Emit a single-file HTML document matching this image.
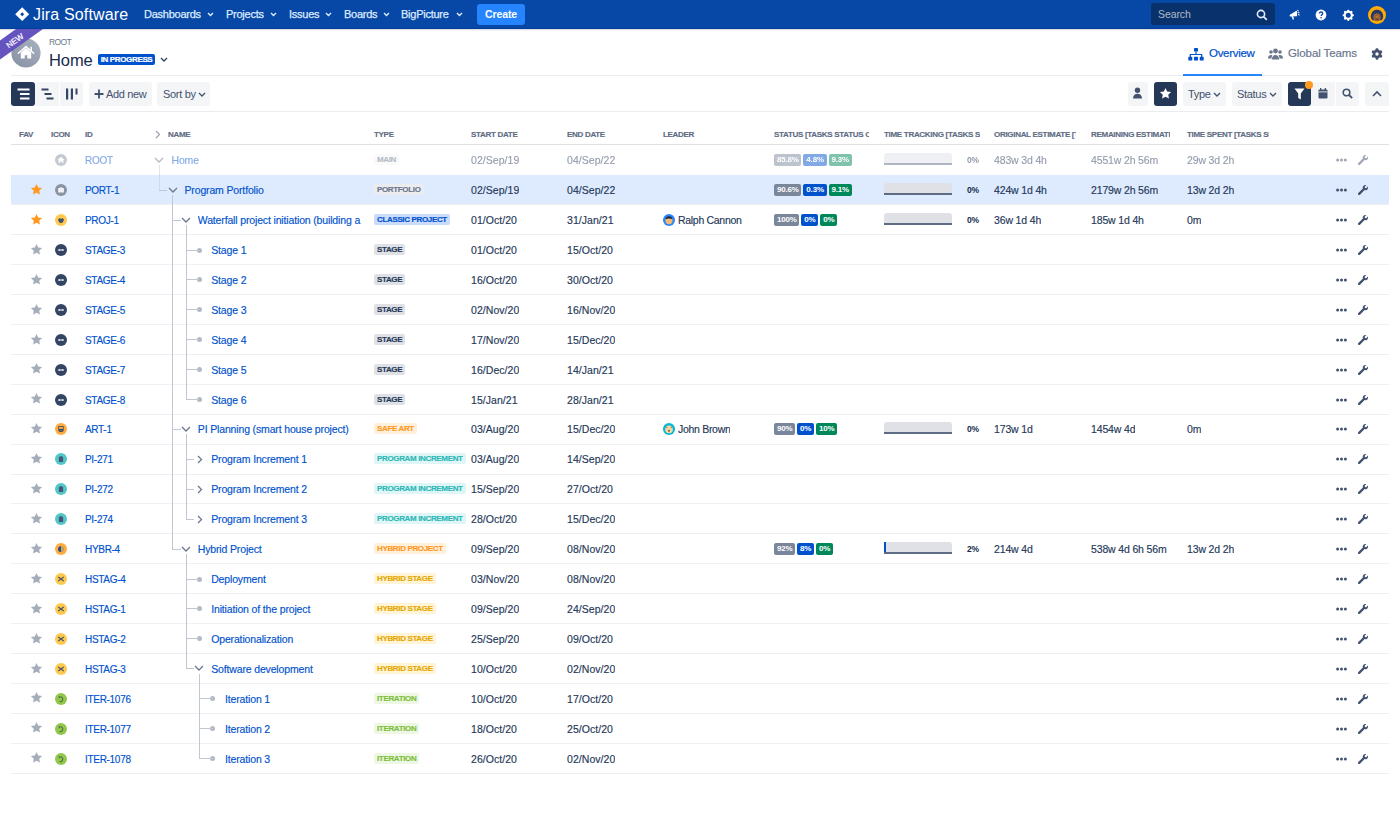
<!DOCTYPE html>
<html><head><meta charset="utf-8"><style>
*{box-sizing:border-box;margin:0;padding:0}
html,body{width:1400px;height:836px;overflow:hidden;background:#fff}
body{font-family:"Liberation Sans",sans-serif;color:#172B4D;position:relative}
.a{position:absolute;white-space:nowrap}
.nav{position:absolute;left:0;top:0;width:1400px;height:29px;background:#0747A6;border-bottom:1px solid #043C9A;box-shadow:0 1px 1.5px rgba(9,30,66,0.18)}
.nv{position:absolute;top:0;height:29px;line-height:29px;color:#DEEBFF;font-size:11px;letter-spacing:-0.25px;-webkit-text-stroke:0.25px #DEEBFF}
.btn{position:absolute;background:#F4F5F7;border-radius:3px}
.dark{background:#253858}
.th{position:absolute;top:130px;font-size:8px;font-weight:bold;color:#5E6C84;letter-spacing:-0.3px;-webkit-text-stroke:0.15px #5E6C84;line-height:10px;white-space:nowrap;overflow:hidden}
.row{position:absolute;left:11px;width:1378px;height:30px;border-bottom:1px solid #EEF0F3}
.c{position:absolute;top:0;height:29px;line-height:31.5px;-webkit-text-stroke:0.15px currentColor;color:#253858;font-size:10.5px;white-space:nowrap;overflow:hidden;letter-spacing:-0.15px}
.lk{color:#0052CC!important}
.loz{position:absolute;top:9px;height:11px;line-height:11px;font-size:8px;font-weight:bold;padding:0 3px;border-radius:2px;letter-spacing:-0.35px;-webkit-text-stroke:0.15px currentColor}
.bd{display:inline-block;height:11.5px;line-height:11.5px;font-size:8px;font-weight:bold;color:#fff;padding:0 2.9px;border-radius:2px;margin-right:2px;letter-spacing:-0.2px;vertical-align:top}
</style></head><body>

<div class="nav"></div>
<svg class="a" style="left:15px;top:7px" width="15" height="15" viewBox="0 0 15 15"><path d="M7.2 0.3L14.2 7.2 7.2 14.1 0.2 7.2z" fill="#fff"/><path d="M7.2 5.2L9.2 7.2 7.2 9.2 5.2 7.2z" fill="#0747A6"/></svg>
<div class="a" style="left:33px;top:4px;height:22px;line-height:22px;font-size:16px;color:#fff;letter-spacing:0.15px">Jira Software</div>
<div class="nv" style="left:144px">Dashboards</div>
<svg class="a" style="left:207px;top:12px" width="7" height="5" viewBox="0 0 7 5"><path d="M1 1l2.5 2.5L6 1" stroke="#DEEBFF" stroke-width="1.4" fill="none"/></svg>
<div class="nv" style="left:226px">Projects</div>
<svg class="a" style="left:270px;top:12px" width="7" height="5" viewBox="0 0 7 5"><path d="M1 1l2.5 2.5L6 1" stroke="#DEEBFF" stroke-width="1.4" fill="none"/></svg>
<div class="nv" style="left:289px">Issues</div>
<svg class="a" style="left:325px;top:12px" width="7" height="5" viewBox="0 0 7 5"><path d="M1 1l2.5 2.5L6 1" stroke="#DEEBFF" stroke-width="1.4" fill="none"/></svg>
<div class="nv" style="left:344px">Boards</div>
<svg class="a" style="left:383px;top:12px" width="7" height="5" viewBox="0 0 7 5"><path d="M1 1l2.5 2.5L6 1" stroke="#DEEBFF" stroke-width="1.4" fill="none"/></svg>
<div class="nv" style="left:401px">BigPicture</div>
<svg class="a" style="left:456px;top:12px" width="7" height="5" viewBox="0 0 7 5"><path d="M1 1l2.5 2.5L6 1" stroke="#DEEBFF" stroke-width="1.4" fill="none"/></svg>
<div class="a" style="left:477px;top:4px;width:48px;height:21px;background:#2684FF;border-radius:3px;color:#fff;font-size:10.5px;font-weight:bold;text-align:center;line-height:21px;letter-spacing:-0.1px">Create</div>
<div class="a" style="left:1151px;top:3px;width:124px;height:22px;background:#09326C;border-radius:3px"></div>
<div class="a" style="left:1158px;top:3px;height:22px;line-height:22px;font-size:10.5px;color:#B3BAC5;letter-spacing:-0.1px">Search</div>
<svg class="a" style="left:1256px;top:9px" width="12" height="12" viewBox="0 0 12 12"><circle cx="5" cy="5" r="3.6" stroke="#DEEBFF" stroke-width="1.6" fill="none"/><path d="M7.6 7.6L10.8 10.8" stroke="#DEEBFF" stroke-width="1.8"/></svg>
<svg class="a" style="left:1286px;top:6px" width="18" height="18" viewBox="0 0 18 18"><path d="M4.2 9.2L10.4 5.5V9.7L4.4 10z" fill="#fff" stroke="#fff" stroke-width="1.2" stroke-linejoin="round"/><path d="M6.4 10.2L7.2 12.9" stroke="#fff" stroke-width="1.5" stroke-linecap="round"/><path d="M11.6 4.4l.8.5M12 6.6l1 .2M12.4 8.6l.9.4" stroke="#DEEBFF" stroke-width="1.1" stroke-linecap="round"/></svg>
<svg class="a" style="left:1315px;top:9px" width="12" height="12" viewBox="0 0 12 12"><circle cx="6" cy="6" r="5.4" fill="#fff"/><path d="M4.3 4.6c0-1 .8-1.6 1.7-1.6s1.7.6 1.7 1.5c0 1.2-1.5 1.2-1.5 2.4" stroke="#0747A6" stroke-width="1.3" fill="none"/><circle cx="6.1" cy="8.7" r=".8" fill="#0747A6"/></svg>
<svg class="a" style="left:1341.5px;top:8.5px" width="12.5" height="12.5" viewBox="0 0 24 24"><circle cx="12" cy="12" r="8.8" fill="#fff"/><rect x="9.9" y="1.1999999999999993" width="4.2" height="10.8" rx="1.47" fill="#fff" transform="rotate(0.0 12 12)"/><rect x="9.9" y="1.1999999999999993" width="4.2" height="10.8" rx="1.47" fill="#fff" transform="rotate(45.0 12 12)"/><rect x="9.9" y="1.1999999999999993" width="4.2" height="10.8" rx="1.47" fill="#fff" transform="rotate(90.0 12 12)"/><rect x="9.9" y="1.1999999999999993" width="4.2" height="10.8" rx="1.47" fill="#fff" transform="rotate(135.0 12 12)"/><rect x="9.9" y="1.1999999999999993" width="4.2" height="10.8" rx="1.47" fill="#fff" transform="rotate(180.0 12 12)"/><rect x="9.9" y="1.1999999999999993" width="4.2" height="10.8" rx="1.47" fill="#fff" transform="rotate(225.0 12 12)"/><rect x="9.9" y="1.1999999999999993" width="4.2" height="10.8" rx="1.47" fill="#fff" transform="rotate(270.0 12 12)"/><rect x="9.9" y="1.1999999999999993" width="4.2" height="10.8" rx="1.47" fill="#fff" transform="rotate(315.0 12 12)"/><circle cx="12" cy="12" r="4.8" fill="#0747A6"/></svg>
<svg class="a" style="left:1368px;top:5.5px" width="18" height="18" viewBox="0 0 18 18"><circle cx="9" cy="9" r="9" fill="#FFAB00"/><path d="M2.8 11c0-4.6 2.6-7.2 6.2-7.2s6.2 2.6 6.2 7.2c-.3 1.5-1 2.6-1.8 3.2H4.6c-.8-.6-1.5-1.7-1.8-3.2z" fill="#24396B"/><ellipse cx="9" cy="11.2" rx="3.7" ry="4" fill="#9C6135"/><path d="M5.2 9c1-1.4 2.3-1.9 3.8-1.9s2.8.5 3.8 1.9c-.4-2.6-1.8-3.8-3.8-3.8S5.6 6.4 5.2 9z" fill="#24396B"/><circle cx="9" cy="10.8" r=".5" fill="#FFC400"/><path d="M7.6 13.3h2.8" stroke="#3A2414" stroke-width=".7"/></svg>
<svg class="a" style="left:11px;top:38px" width="30" height="30" viewBox="0 0 30 30"><defs><linearGradient id="hg" x1="1" y1="0" x2="0" y2="1"><stop offset="0" stop-color="#A9B1BF"/><stop offset="1" stop-color="#8590A2"/></linearGradient></defs><circle cx="15" cy="15" r="14.6" fill="url(#hg)"/><path d="M7.3 15.3L15 8.6l7.7 6.7" stroke="#fff" stroke-width="1.5" fill="none" stroke-linecap="round"/><path d="M20.2 13.1V9.2" stroke="#fff" stroke-width="1.5" stroke-linecap="round"/><path d="M9.8 14.5L15 10l5.2 4.5V20.6h-3.9v-3.3h-2.6v3.3H9.8z" fill="#fff"/></svg>
<svg class="a" style="left:0;top:29px" width="50" height="35" viewBox="0 0 50 35"><path d="M16 0H43L0 30.5V11.4z" fill="#6554C0"/><text x="0" y="0" transform="translate(15.2 12.2) rotate(-35.3)" text-anchor="middle" font-family="Liberation Sans" font-size="8.2" fill="#fff" stroke="#fff" stroke-width="0.2" dominant-baseline="middle">NEW</text></svg>
<div class="a" style="left:49px;top:37px;font-size:8.5px;line-height:10px;color:#6B778C;letter-spacing:-0.6px">ROOT</div>
<div class="a" style="left:49px;top:50px;font-size:16.5px;line-height:20px;color:#172B4D;letter-spacing:-0.1px">Home</div>
<div class="a" style="left:98px;top:54px;width:57px;height:11px;background:#0052CC;border-radius:2px;color:#fff;font-size:8px;font-weight:bold;line-height:11px;text-align:center;letter-spacing:-0.35px;-webkit-text-stroke:0.2px #fff">IN PROGRESS</div>
<svg class="a" style="left:160px;top:57px" width="8" height="6" viewBox="0 0 8 6"><path d="M1 1l3 3 3-3" stroke="#344563" stroke-width="1.4" fill="none"/></svg>
<svg class="a" style="left:1188px;top:48px" width="16" height="13" viewBox="0 0 16 13"><rect x="6" y="0" width="4" height="3.5" rx=".6" fill="#0052CC"/><path d="M8 3.5v3M2.3 9V6.5h11.4V9" stroke="#0052CC" stroke-width="1.2" fill="none"/><rect x="0.3" y="8.8" width="4" height="3.8" rx=".6" fill="#0052CC"/><rect x="6" y="8.8" width="4" height="3.8" rx=".6" fill="#0052CC"/><rect x="11.7" y="8.8" width="4" height="3.8" rx=".6" fill="#0052CC"/></svg>
<div class="a" style="left:1209px;top:45px;font-size:11.5px;line-height:16px;color:#0052CC;letter-spacing:-0.3px;-webkit-text-stroke:0.2px #0052CC">Overview</div>
<svg class="a" style="left:1268px;top:48px" width="15" height="12" viewBox="0 0 15 12"><circle cx="7.5" cy="3" r="2.4" fill="#6B778C"/><circle cx="3" cy="4" r="1.8" fill="#6B778C"/><circle cx="12" cy="4" r="1.8" fill="#6B778C"/><path d="M3.8 11.5c0-2.5 1.6-4.5 3.7-4.5s3.7 2 3.7 4.5z" fill="#6B778C"/><path d="M0 10.5c0-2 1.2-3.5 3-3.5.6 0 1 .1 1.4.4-.6.8-1 1.9-1 3.1z" fill="#6B778C"/><path d="M15 10.5c0-2-1.2-3.5-3-3.5-.6 0-1 .1-1.4.4.6.8 1 1.9 1 3.1z" fill="#6B778C"/></svg>
<div class="a" style="left:1288px;top:45px;font-size:11.5px;line-height:16px;color:#6B778C;letter-spacing:-0.1px;-webkit-text-stroke:0.2px #6B778C">Global Teams</div>
<svg class="a" style="left:1371px;top:48px" width="12" height="12" viewBox="0 0 24 24"><circle cx="12" cy="12" r="8.8" fill="#42526E"/><rect x="9.3" y="0.5" width="5.4" height="11.5" rx="1.89" fill="#42526E" transform="rotate(0.0 12 12)"/><rect x="9.3" y="0.5" width="5.4" height="11.5" rx="1.89" fill="#42526E" transform="rotate(60.0 12 12)"/><rect x="9.3" y="0.5" width="5.4" height="11.5" rx="1.89" fill="#42526E" transform="rotate(120.0 12 12)"/><rect x="9.3" y="0.5" width="5.4" height="11.5" rx="1.89" fill="#42526E" transform="rotate(180.0 12 12)"/><rect x="9.3" y="0.5" width="5.4" height="11.5" rx="1.89" fill="#42526E" transform="rotate(240.0 12 12)"/><rect x="9.3" y="0.5" width="5.4" height="11.5" rx="1.89" fill="#42526E" transform="rotate(300.0 12 12)"/><circle cx="12" cy="12" r="3.4" fill="#fff"/></svg>
<div class="a" style="left:11px;top:75px;width:1378px;height:1px;background:#EBECF0"></div>
<div class="a" style="left:1183px;top:74px;width:79px;height:2px;background:#2684FF"></div>
<div class="btn" style="left:35px;top:82px;width:48px;height:24px"></div>
<div class="btn dark" style="left:11px;top:82px;width:24px;height:24px"></div>
<svg class="a" style="left:17px;top:88px" width="13" height="12" viewBox="0 0 13 12"><rect x="0.5" y="0.5" width="12" height="2" fill="#fff"/><rect x="3" y="5" width="9.5" height="2" fill="#fff"/><rect x="3" y="9.5" width="9.5" height="2" fill="#fff"/></svg>
<svg class="a" style="left:41px;top:88px" width="13" height="12" viewBox="0 0 13 12"><rect x="0.5" y="0.5" width="7" height="2" fill="#344563"/><rect x="3.5" y="5" width="7" height="2" fill="#344563"/><rect x="5.5" y="9.5" width="7" height="2" fill="#344563"/></svg>
<div class="a" style="left:59px;top:82px;width:1px;height:24px;background:#fff"></div>
<svg class="a" style="left:65px;top:88px" width="13" height="12" viewBox="0 0 13 12"><rect x="1" y="0.5" width="2.2" height="11" fill="#344563"/><rect x="5.8" y="0.5" width="2.2" height="11" fill="#344563"/><rect x="10.5" y="0.5" width="2" height="6" fill="#344563"/></svg>
<div class="btn" style="left:89px;top:82px;width:63px;height:24px"></div>
<svg class="a" style="left:94px;top:89px" width="10" height="10" viewBox="0 0 10 10"><path d="M5 .5v9M.5 5h9" stroke="#42526E" stroke-width="1.8"/></svg>
<div class="a" style="left:106px;top:82px;line-height:24px;font-size:11px;color:#42526E;letter-spacing:-0.35px">Add new</div>
<div class="btn" style="left:157px;top:82px;width:53px;height:24px"></div>
<div class="a" style="left:163px;top:82px;line-height:24px;font-size:11px;color:#42526E;letter-spacing:-0.3px">Sort by</div>
<svg class="a" style="left:198px;top:92px" width="8" height="5" viewBox="0 0 8 5"><path d="M1 1l3 3 3-3" stroke="#42526E" stroke-width="1.3" fill="none"/></svg>
<div class="btn" style="left:1128px;top:82px;width:20px;height:24px"></div>
<svg class="a" style="left:1132px;top:87px" width="11" height="12" viewBox="0 0 11 12"><circle cx="5.5" cy="3.3" r="2.7" fill="#42526E"/><path d="M1 11.5c0-3 2-4.7 4.5-4.7S10 8.5 10 11.5z" fill="#42526E"/></svg>
<div class="btn dark" style="left:1154px;top:82px;width:23px;height:24px"></div>
<svg class="a" style="left:1159px;top:87px" width="13" height="13" viewBox="0 0 24 24"><path fill="#fff" d="M12 1.8l3.1 6.6 7.2.9-5.3 4.9 1.4 7.1L12 17.8l-6.4 3.5 1.4-7.1L1.7 9.3l7.2-.9z"/></svg>
<div class="btn" style="left:1183px;top:82px;width:43px;height:24px"></div>
<div class="a" style="left:1188px;top:82px;line-height:24px;font-size:11px;color:#42526E;letter-spacing:-0.3px">Type</div>
<svg class="a" style="left:1213px;top:92px" width="8" height="5" viewBox="0 0 8 5"><path d="M1 1l3 3 3-3" stroke="#42526E" stroke-width="1.3" fill="none"/></svg>
<div class="btn" style="left:1232px;top:82px;width:50px;height:24px"></div>
<div class="a" style="left:1237px;top:82px;line-height:24px;font-size:11px;color:#42526E;letter-spacing:-0.3px">Status</div>
<svg class="a" style="left:1269px;top:92px" width="8" height="5" viewBox="0 0 8 5"><path d="M1 1l3 3 3-3" stroke="#42526E" stroke-width="1.3" fill="none"/></svg>
<div class="btn" style="left:1311px;top:82px;width:48px;height:24px"></div>
<div class="btn dark" style="left:1288px;top:82px;width:23px;height:24px"></div>
<svg class="a" style="left:1294px;top:88px" width="11" height="12" viewBox="0 0 11 12"><path d="M0.5 0.5h10L6.8 5.5v6L4.2 10V5.5z" fill="#fff"/></svg>
<div class="a" style="left:1305px;top:81px;width:8px;height:8px;border-radius:50%;background:#FF991F"></div>
<svg class="a" style="left:1318px;top:88px" width="10" height="11" viewBox="0 0 10 11"><rect x="0.5" y="1.5" width="9" height="9" rx="1" fill="#42526E"/><rect x="2" y="0" width="1.3" height="2.5" fill="#42526E"/><rect x="6.7" y="0" width="1.3" height="2.5" fill="#42526E"/><rect x="0.5" y="3.5" width="9" height=".8" fill="#F4F5F7"/></svg>
<div class="a" style="left:1335px;top:82px;width:1px;height:24px;background:#fff"></div>
<svg class="a" style="left:1342px;top:88px" width="11" height="11" viewBox="0 0 11 11"><circle cx="4.5" cy="4.5" r="3.3" stroke="#42526E" stroke-width="1.6" fill="none"/><path d="M7 7l3.2 3.2" stroke="#42526E" stroke-width="1.8"/></svg>
<div class="btn" style="left:1365px;top:82px;width:24px;height:24px"></div>
<svg class="a" style="left:1372px;top:90px" width="10" height="7" viewBox="0 0 10 7"><path d="M1 6l4-4 4 4" stroke="#42526E" stroke-width="1.6" fill="none"/></svg>
<div class="a" style="left:11px;top:111px;width:1378px;height:1px;background:#EBECF0"></div>
<div class="th" style="left:19px;width:30px">FAV</div>
<div class="th" style="left:51px;width:30px">ICON</div>
<div class="th" style="left:85px;width:60px">ID</div>
<div class="th" style="left:168px;width:190px">NAME</div>
<div class="th" style="left:374px;width:90px">TYPE</div>
<div class="th" style="left:471px;width:90px">START DATE</div>
<div class="th" style="left:567px;width:90px">END DATE</div>
<div class="th" style="left:663px;width:100px">LEADER</div>
<div class="th" style="left:774px;width:95px">STATUS [TASKS STATUS COUNT]</div>
<div class="th" style="left:884px;width:96px">TIME TRACKING [TASKS SUM]</div>
<div class="th" style="left:994px;width:82px">ORIGINAL ESTIMATE [TASKS]</div>
<div class="th" style="left:1091px;width:79px">REMAINING ESTIMATE [TASKS]</div>
<div class="th" style="left:1187px;width:82px">TIME SPENT [TASKS SUM]</div>
<svg class="a" style="left:155px;top:130px" width="6" height="9" viewBox="0 0 6 9"><path d="M1 1l3.5 3.5L1 8" stroke="#97A0AF" stroke-width="1.1" fill="none"/></svg>
<div class="a" style="left:11px;top:144px;width:1378px;height:1px;background:#DFE1E6"></div>
<div class="a" style="left:0;top:145.3px;width:1400px;height:30px;opacity:0.5;">
<div class="a" style="left:55px;top:9px;line-height:0"><svg width="12" height="12" viewBox="0 0 12 12"><circle cx="6" cy="6" r="6" fill="#8993A4"/><path d="M6 2.8L2.6 5.9h1v2.9h1.7V7.2h1.4v1.6h1.7V5.9h1z" fill="#fff"/></svg></div>
<div class="c lk" style="left:85px;width:70px;font-size:10px;letter-spacing:-0.3px">ROOT</div>
<div class="a" style="left:154.3px;top:11.5px;line-height:0"><svg width="10" height="6" viewBox="0 0 10 6"><path d="M1 1l4 4 4-4" stroke="#6B778C" stroke-width="1.3" fill="none"/></svg></div>
<div class="c lk" style="left:171.5px;width:196.5px">Home</div>
<div class="loz" style="left:374px;background:#F4F5F7;color:#6B778C">MAIN</div>
<div class="c" style="left:471px;letter-spacing:0.05px">02/Sep/19</div>
<div class="c" style="left:567px;letter-spacing:0.05px">04/Sep/22</div>
<div class="a" style="left:774px;top:9px;height:11px;line-height:0"><span class="bd" style="background:#7A869A">85.8%</span><span class="bd" style="background:#0052CC">4.8%</span><span class="bd" style="background:#00875A">9.3%</span></div>
<div class="a" style="left:884px;top:8px;width:68px;height:10px;background:#DFE1E6;border-radius:3px 3px 0 0"></div>
<div class="a" style="left:884px;top:18px;width:68px;height:2px;background:#5E6C84"></div>
<div class="a" style="left:967px;top:1px;line-height:29px;font-size:8.5px;font-weight:bold;color:#172B4D;letter-spacing:-0.3px">0%</div>
<div class="c" style="left:994px">483w 3d 4h</div>
<div class="c" style="left:1091px">4551w 2h 56m</div>
<div class="c" style="left:1187px">29w 3d 2h</div>
<svg class="a" style="left:1336px;top:13px" width="11" height="4" viewBox="0 0 11 4"><circle cx="1.6" cy="2" r="1.5" fill="#42526E"/><circle cx="5.5" cy="2" r="1.5" fill="#42526E"/><circle cx="9.4" cy="2" r="1.5" fill="#42526E"/></svg>
<div class="a" style="left:1357px;top:9px;line-height:0"><svg width="12" height="12" viewBox="0 0 12 12"><path d="M10.9 2.6L9.2 4.3 7.9 4.1 7.7 2.8 9.4 1.1C8.3.7 7 1 6.3 1.9c-.6.7-.7 1.7-.4 2.5L1.3 9c-.5.5-.5 1.2 0 1.7s1.2.5 1.7 0l4.6-4.6c.8.3 1.8.2 2.5-.4.9-.7 1.2-2 .8-3.1z" fill="#42526E"/></svg></div>
</div>
<div class="a" style="left:11px;top:175px;width:1378px;height:30px;background:#DEEBFF"></div>
<div class="a" style="left:11px;top:204px;width:1378px;height:1px;background:#EEF0F3"></div>
<div class="a" style="left:0;top:175.21px;width:1400px;height:30px;">
<div class="a" style="left:29.5px;top:7.8px;line-height:0"><svg width="13" height="13" viewBox="0 0 24 24"><path fill="#FF991F" d="M12 1.8l3.1 6.6 7.2.9-5.3 4.9 1.4 7.1L12 17.8l-6.4 3.5 1.4-7.1L1.7 9.3l7.2-.9z"/></svg></div>
<div class="a" style="left:55px;top:9px;line-height:0"><svg width="12" height="12" viewBox="0 0 12 12"><circle cx="6" cy="6" r="6" fill="#8993A4"/><rect x="3.3" y="4" width="1.7" height="4.6" rx=".3" fill="#fff"/><rect x="5.2" y="3.3" width="1.7" height="5.3" rx=".3" fill="#fff"/><rect x="7.1" y="4" width="1.7" height="4.6" rx=".3" fill="#fff"/></svg></div>
<div class="c lk" style="left:85px;width:70px;font-size:10px;letter-spacing:-0.3px">PORT-1</div>
<div class="a" style="left:167.6px;top:11.5px;line-height:0"><svg width="10" height="6" viewBox="0 0 10 6"><path d="M1 1l4 4 4-4" stroke="#6B778C" stroke-width="1.3" fill="none"/></svg></div>
<div class="c lk" style="left:184.5px;width:183.5px">Program Portfolio</div>
<div class="loz" style="left:374px;background:#EBECF0;color:#6B778C">PORTFOLIO</div>
<div class="c" style="left:471px;letter-spacing:0.05px">02/Sep/19</div>
<div class="c" style="left:567px;letter-spacing:0.05px">04/Sep/22</div>
<div class="a" style="left:774px;top:9px;height:11px;line-height:0"><span class="bd" style="background:#7A869A">90.6%</span><span class="bd" style="background:#0052CC">0.3%</span><span class="bd" style="background:#00875A">9.1%</span></div>
<div class="a" style="left:884px;top:8px;width:68px;height:10px;background:#DFE1E6;border-radius:3px 3px 0 0"></div>
<div class="a" style="left:884px;top:18px;width:68px;height:2px;background:#5E6C84"></div>
<div class="a" style="left:967px;top:1px;line-height:29px;font-size:8.5px;font-weight:bold;color:#172B4D;letter-spacing:-0.3px">0%</div>
<div class="c" style="left:994px">424w 1d 4h</div>
<div class="c" style="left:1091px">2179w 2h 56m</div>
<div class="c" style="left:1187px">13w 2d 2h</div>
<svg class="a" style="left:1336px;top:13px" width="11" height="4" viewBox="0 0 11 4"><circle cx="1.6" cy="2" r="1.5" fill="#42526E"/><circle cx="5.5" cy="2" r="1.5" fill="#42526E"/><circle cx="9.4" cy="2" r="1.5" fill="#42526E"/></svg>
<div class="a" style="left:1357px;top:9px;line-height:0"><svg width="12" height="12" viewBox="0 0 12 12"><path d="M10.9 2.6L9.2 4.3 7.9 4.1 7.7 2.8 9.4 1.1C8.3.7 7 1 6.3 1.9c-.6.7-.7 1.7-.4 2.5L1.3 9c-.5.5-.5 1.2 0 1.7s1.2.5 1.7 0l4.6-4.6c.8.3 1.8.2 2.5-.4.9-.7 1.2-2 .8-3.1z" fill="#42526E"/></svg></div>
</div>
<div class="a" style="left:11px;top:234px;width:1378px;height:1px;background:#EEF0F3"></div>
<div class="a" style="left:0;top:205.12px;width:1400px;height:30px;">
<div class="a" style="left:29.5px;top:7.8px;line-height:0"><svg width="13" height="13" viewBox="0 0 24 24"><path fill="#FF991F" d="M12 1.8l3.1 6.6 7.2.9-5.3 4.9 1.4 7.1L12 17.8l-6.4 3.5 1.4-7.1L1.7 9.3l7.2-.9z"/></svg></div>
<div class="a" style="left:55px;top:9px;line-height:0"><svg width="12" height="12" viewBox="0 0 12 12"><circle cx="6" cy="6" r="6" fill="#FFC94D"/><path d="M3 5.6l1.6-1.6 1.4.9 1.4-.9L9 5.6 8.2 7.8 6.9 9H5.1L3.8 7.8z" fill="#42526E"/></svg></div>
<div class="c lk" style="left:85px;width:70px;font-size:10px;letter-spacing:-0.3px">PROJ-1</div>
<div class="a" style="left:181.1px;top:11.5px;line-height:0"><svg width="10" height="6" viewBox="0 0 10 6"><path d="M1 1l4 4 4-4" stroke="#6B778C" stroke-width="1.3" fill="none"/></svg></div>
<div class="c lk" style="left:197.8px;width:170.2px">Waterfall project initiation (building a</div>
<div class="loz" style="left:374px;background:#C9DCFB;color:#0052CC">CLASSIC PROJECT</div>
<div class="c" style="left:471px;letter-spacing:0.05px">01/Oct/20</div>
<div class="c" style="left:567px;letter-spacing:0.05px">31/Jan/21</div>
<div class="a" style="left:663px;top:9px;line-height:0"><svg width="12" height="12" viewBox="0 0 12 12"><circle cx="6" cy="6" r="6" fill="#2684FF"/><circle cx="6" cy="6.6" r="3.6" fill="#F5B971"/><path d="M2.6 5.5c0-2.2 1.5-3.2 3.4-3.2s3.4 1 3.4 3.2c-.8-.6-2-.9-3.4-.9s-2.6.3-3.4.9z" fill="#1E2A3A"/></svg></div>
<div class="c" style="left:678px;letter-spacing:-0.3px">Ralph Cannon</div>
<div class="a" style="left:774px;top:9px;height:11px;line-height:0"><span class="bd" style="background:#7A869A">100%</span><span class="bd" style="background:#0052CC">0%</span><span class="bd" style="background:#00875A">0%</span></div>
<div class="a" style="left:884px;top:8px;width:68px;height:10px;background:#DFE1E6;border-radius:3px 3px 0 0"></div>
<div class="a" style="left:884px;top:18px;width:68px;height:2px;background:#5E6C84"></div>
<div class="a" style="left:967px;top:1px;line-height:29px;font-size:8.5px;font-weight:bold;color:#172B4D;letter-spacing:-0.3px">0%</div>
<div class="c" style="left:994px">36w 1d 4h</div>
<div class="c" style="left:1091px">185w 1d 4h</div>
<div class="c" style="left:1187px">0m</div>
<svg class="a" style="left:1336px;top:13px" width="11" height="4" viewBox="0 0 11 4"><circle cx="1.6" cy="2" r="1.5" fill="#42526E"/><circle cx="5.5" cy="2" r="1.5" fill="#42526E"/><circle cx="9.4" cy="2" r="1.5" fill="#42526E"/></svg>
<div class="a" style="left:1357px;top:9px;line-height:0"><svg width="12" height="12" viewBox="0 0 12 12"><path d="M10.9 2.6L9.2 4.3 7.9 4.1 7.7 2.8 9.4 1.1C8.3.7 7 1 6.3 1.9c-.6.7-.7 1.7-.4 2.5L1.3 9c-.5.5-.5 1.2 0 1.7s1.2.5 1.7 0l4.6-4.6c.8.3 1.8.2 2.5-.4.9-.7 1.2-2 .8-3.1z" fill="#42526E"/></svg></div>
</div>
<div class="a" style="left:11px;top:264px;width:1378px;height:1px;background:#EEF0F3"></div>
<div class="a" style="left:0;top:235.03000000000003px;width:1400px;height:30px;">
<div class="a" style="left:29.5px;top:7.8px;line-height:0"><svg width="13" height="13" viewBox="0 0 24 24"><path fill="#A5ADBA" d="M12 1.8l3.1 6.6 7.2.9-5.3 4.9 1.4 7.1L12 17.8l-6.4 3.5 1.4-7.1L1.7 9.3l7.2-.9z"/></svg></div>
<div class="a" style="left:55px;top:9px;line-height:0"><svg width="12" height="12" viewBox="0 0 12 12"><circle cx="6" cy="6" r="6" fill="#344563"/><rect x="3" y="5.4" width="6" height="1.2" rx=".6" fill="#fff"/><path d="M3.4 6l1.3-1.1v2.2zM8.6 6L7.3 4.9v2.2z" fill="#fff"/></svg></div>
<div class="c lk" style="left:85px;width:70px;font-size:10px;letter-spacing:-0.3px">STAGE-3</div>
<div class="a" style="left:196.8px;top:12.5px;width:5px;height:5px;border-radius:50%;background:#B3BAC5"></div>
<div class="c lk" style="left:211.2px;width:156.8px">Stage 1</div>
<div class="loz" style="left:374px;background:#DFE1E6;color:#253858">STAGE</div>
<div class="c" style="left:471px;letter-spacing:0.05px">01/Oct/20</div>
<div class="c" style="left:567px;letter-spacing:0.05px">15/Oct/20</div>
<svg class="a" style="left:1336px;top:13px" width="11" height="4" viewBox="0 0 11 4"><circle cx="1.6" cy="2" r="1.5" fill="#42526E"/><circle cx="5.5" cy="2" r="1.5" fill="#42526E"/><circle cx="9.4" cy="2" r="1.5" fill="#42526E"/></svg>
<div class="a" style="left:1357px;top:9px;line-height:0"><svg width="12" height="12" viewBox="0 0 12 12"><path d="M10.9 2.6L9.2 4.3 7.9 4.1 7.7 2.8 9.4 1.1C8.3.7 7 1 6.3 1.9c-.6.7-.7 1.7-.4 2.5L1.3 9c-.5.5-.5 1.2 0 1.7s1.2.5 1.7 0l4.6-4.6c.8.3 1.8.2 2.5-.4.9-.7 1.2-2 .8-3.1z" fill="#42526E"/></svg></div>
</div>
<div class="a" style="left:11px;top:294px;width:1378px;height:1px;background:#EEF0F3"></div>
<div class="a" style="left:0;top:264.94px;width:1400px;height:30px;">
<div class="a" style="left:29.5px;top:7.8px;line-height:0"><svg width="13" height="13" viewBox="0 0 24 24"><path fill="#A5ADBA" d="M12 1.8l3.1 6.6 7.2.9-5.3 4.9 1.4 7.1L12 17.8l-6.4 3.5 1.4-7.1L1.7 9.3l7.2-.9z"/></svg></div>
<div class="a" style="left:55px;top:9px;line-height:0"><svg width="12" height="12" viewBox="0 0 12 12"><circle cx="6" cy="6" r="6" fill="#344563"/><rect x="3" y="5.4" width="6" height="1.2" rx=".6" fill="#fff"/><path d="M3.4 6l1.3-1.1v2.2zM8.6 6L7.3 4.9v2.2z" fill="#fff"/></svg></div>
<div class="c lk" style="left:85px;width:70px;font-size:10px;letter-spacing:-0.3px">STAGE-4</div>
<div class="a" style="left:196.8px;top:12.5px;width:5px;height:5px;border-radius:50%;background:#B3BAC5"></div>
<div class="c lk" style="left:211.2px;width:156.8px">Stage 2</div>
<div class="loz" style="left:374px;background:#DFE1E6;color:#253858">STAGE</div>
<div class="c" style="left:471px;letter-spacing:0.05px">16/Oct/20</div>
<div class="c" style="left:567px;letter-spacing:0.05px">30/Oct/20</div>
<svg class="a" style="left:1336px;top:13px" width="11" height="4" viewBox="0 0 11 4"><circle cx="1.6" cy="2" r="1.5" fill="#42526E"/><circle cx="5.5" cy="2" r="1.5" fill="#42526E"/><circle cx="9.4" cy="2" r="1.5" fill="#42526E"/></svg>
<div class="a" style="left:1357px;top:9px;line-height:0"><svg width="12" height="12" viewBox="0 0 12 12"><path d="M10.9 2.6L9.2 4.3 7.9 4.1 7.7 2.8 9.4 1.1C8.3.7 7 1 6.3 1.9c-.6.7-.7 1.7-.4 2.5L1.3 9c-.5.5-.5 1.2 0 1.7s1.2.5 1.7 0l4.6-4.6c.8.3 1.8.2 2.5-.4.9-.7 1.2-2 .8-3.1z" fill="#42526E"/></svg></div>
</div>
<div class="a" style="left:11px;top:324px;width:1378px;height:1px;background:#EEF0F3"></div>
<div class="a" style="left:0;top:294.85px;width:1400px;height:30px;">
<div class="a" style="left:29.5px;top:7.8px;line-height:0"><svg width="13" height="13" viewBox="0 0 24 24"><path fill="#A5ADBA" d="M12 1.8l3.1 6.6 7.2.9-5.3 4.9 1.4 7.1L12 17.8l-6.4 3.5 1.4-7.1L1.7 9.3l7.2-.9z"/></svg></div>
<div class="a" style="left:55px;top:9px;line-height:0"><svg width="12" height="12" viewBox="0 0 12 12"><circle cx="6" cy="6" r="6" fill="#344563"/><rect x="3" y="5.4" width="6" height="1.2" rx=".6" fill="#fff"/><path d="M3.4 6l1.3-1.1v2.2zM8.6 6L7.3 4.9v2.2z" fill="#fff"/></svg></div>
<div class="c lk" style="left:85px;width:70px;font-size:10px;letter-spacing:-0.3px">STAGE-5</div>
<div class="a" style="left:196.8px;top:12.5px;width:5px;height:5px;border-radius:50%;background:#B3BAC5"></div>
<div class="c lk" style="left:211.2px;width:156.8px">Stage 3</div>
<div class="loz" style="left:374px;background:#DFE1E6;color:#253858">STAGE</div>
<div class="c" style="left:471px;letter-spacing:0.05px">02/Nov/20</div>
<div class="c" style="left:567px;letter-spacing:0.05px">16/Nov/20</div>
<svg class="a" style="left:1336px;top:13px" width="11" height="4" viewBox="0 0 11 4"><circle cx="1.6" cy="2" r="1.5" fill="#42526E"/><circle cx="5.5" cy="2" r="1.5" fill="#42526E"/><circle cx="9.4" cy="2" r="1.5" fill="#42526E"/></svg>
<div class="a" style="left:1357px;top:9px;line-height:0"><svg width="12" height="12" viewBox="0 0 12 12"><path d="M10.9 2.6L9.2 4.3 7.9 4.1 7.7 2.8 9.4 1.1C8.3.7 7 1 6.3 1.9c-.6.7-.7 1.7-.4 2.5L1.3 9c-.5.5-.5 1.2 0 1.7s1.2.5 1.7 0l4.6-4.6c.8.3 1.8.2 2.5-.4.9-.7 1.2-2 .8-3.1z" fill="#42526E"/></svg></div>
</div>
<div class="a" style="left:11px;top:354px;width:1378px;height:1px;background:#EEF0F3"></div>
<div class="a" style="left:0;top:324.76px;width:1400px;height:30px;">
<div class="a" style="left:29.5px;top:7.8px;line-height:0"><svg width="13" height="13" viewBox="0 0 24 24"><path fill="#A5ADBA" d="M12 1.8l3.1 6.6 7.2.9-5.3 4.9 1.4 7.1L12 17.8l-6.4 3.5 1.4-7.1L1.7 9.3l7.2-.9z"/></svg></div>
<div class="a" style="left:55px;top:9px;line-height:0"><svg width="12" height="12" viewBox="0 0 12 12"><circle cx="6" cy="6" r="6" fill="#344563"/><rect x="3" y="5.4" width="6" height="1.2" rx=".6" fill="#fff"/><path d="M3.4 6l1.3-1.1v2.2zM8.6 6L7.3 4.9v2.2z" fill="#fff"/></svg></div>
<div class="c lk" style="left:85px;width:70px;font-size:10px;letter-spacing:-0.3px">STAGE-6</div>
<div class="a" style="left:196.8px;top:12.5px;width:5px;height:5px;border-radius:50%;background:#B3BAC5"></div>
<div class="c lk" style="left:211.2px;width:156.8px">Stage 4</div>
<div class="loz" style="left:374px;background:#DFE1E6;color:#253858">STAGE</div>
<div class="c" style="left:471px;letter-spacing:0.05px">17/Nov/20</div>
<div class="c" style="left:567px;letter-spacing:0.05px">15/Dec/20</div>
<svg class="a" style="left:1336px;top:13px" width="11" height="4" viewBox="0 0 11 4"><circle cx="1.6" cy="2" r="1.5" fill="#42526E"/><circle cx="5.5" cy="2" r="1.5" fill="#42526E"/><circle cx="9.4" cy="2" r="1.5" fill="#42526E"/></svg>
<div class="a" style="left:1357px;top:9px;line-height:0"><svg width="12" height="12" viewBox="0 0 12 12"><path d="M10.9 2.6L9.2 4.3 7.9 4.1 7.7 2.8 9.4 1.1C8.3.7 7 1 6.3 1.9c-.6.7-.7 1.7-.4 2.5L1.3 9c-.5.5-.5 1.2 0 1.7s1.2.5 1.7 0l4.6-4.6c.8.3 1.8.2 2.5-.4.9-.7 1.2-2 .8-3.1z" fill="#42526E"/></svg></div>
</div>
<div class="a" style="left:11px;top:384px;width:1378px;height:1px;background:#EEF0F3"></div>
<div class="a" style="left:0;top:354.67px;width:1400px;height:30px;">
<div class="a" style="left:29.5px;top:7.8px;line-height:0"><svg width="13" height="13" viewBox="0 0 24 24"><path fill="#A5ADBA" d="M12 1.8l3.1 6.6 7.2.9-5.3 4.9 1.4 7.1L12 17.8l-6.4 3.5 1.4-7.1L1.7 9.3l7.2-.9z"/></svg></div>
<div class="a" style="left:55px;top:9px;line-height:0"><svg width="12" height="12" viewBox="0 0 12 12"><circle cx="6" cy="6" r="6" fill="#344563"/><rect x="3" y="5.4" width="6" height="1.2" rx=".6" fill="#fff"/><path d="M3.4 6l1.3-1.1v2.2zM8.6 6L7.3 4.9v2.2z" fill="#fff"/></svg></div>
<div class="c lk" style="left:85px;width:70px;font-size:10px;letter-spacing:-0.3px">STAGE-7</div>
<div class="a" style="left:196.8px;top:12.5px;width:5px;height:5px;border-radius:50%;background:#B3BAC5"></div>
<div class="c lk" style="left:211.2px;width:156.8px">Stage 5</div>
<div class="loz" style="left:374px;background:#DFE1E6;color:#253858">STAGE</div>
<div class="c" style="left:471px;letter-spacing:0.05px">16/Dec/20</div>
<div class="c" style="left:567px;letter-spacing:0.05px">14/Jan/21</div>
<svg class="a" style="left:1336px;top:13px" width="11" height="4" viewBox="0 0 11 4"><circle cx="1.6" cy="2" r="1.5" fill="#42526E"/><circle cx="5.5" cy="2" r="1.5" fill="#42526E"/><circle cx="9.4" cy="2" r="1.5" fill="#42526E"/></svg>
<div class="a" style="left:1357px;top:9px;line-height:0"><svg width="12" height="12" viewBox="0 0 12 12"><path d="M10.9 2.6L9.2 4.3 7.9 4.1 7.7 2.8 9.4 1.1C8.3.7 7 1 6.3 1.9c-.6.7-.7 1.7-.4 2.5L1.3 9c-.5.5-.5 1.2 0 1.7s1.2.5 1.7 0l4.6-4.6c.8.3 1.8.2 2.5-.4.9-.7 1.2-2 .8-3.1z" fill="#42526E"/></svg></div>
</div>
<div class="a" style="left:11px;top:414px;width:1378px;height:1px;background:#EEF0F3"></div>
<div class="a" style="left:0;top:384.58000000000004px;width:1400px;height:30px;">
<div class="a" style="left:29.5px;top:7.8px;line-height:0"><svg width="13" height="13" viewBox="0 0 24 24"><path fill="#A5ADBA" d="M12 1.8l3.1 6.6 7.2.9-5.3 4.9 1.4 7.1L12 17.8l-6.4 3.5 1.4-7.1L1.7 9.3l7.2-.9z"/></svg></div>
<div class="a" style="left:55px;top:9px;line-height:0"><svg width="12" height="12" viewBox="0 0 12 12"><circle cx="6" cy="6" r="6" fill="#344563"/><rect x="3" y="5.4" width="6" height="1.2" rx=".6" fill="#fff"/><path d="M3.4 6l1.3-1.1v2.2zM8.6 6L7.3 4.9v2.2z" fill="#fff"/></svg></div>
<div class="c lk" style="left:85px;width:70px;font-size:10px;letter-spacing:-0.3px">STAGE-8</div>
<div class="a" style="left:196.8px;top:12.5px;width:5px;height:5px;border-radius:50%;background:#B3BAC5"></div>
<div class="c lk" style="left:211.2px;width:156.8px">Stage 6</div>
<div class="loz" style="left:374px;background:#DFE1E6;color:#253858">STAGE</div>
<div class="c" style="left:471px;letter-spacing:0.05px">15/Jan/21</div>
<div class="c" style="left:567px;letter-spacing:0.05px">28/Jan/21</div>
<svg class="a" style="left:1336px;top:13px" width="11" height="4" viewBox="0 0 11 4"><circle cx="1.6" cy="2" r="1.5" fill="#42526E"/><circle cx="5.5" cy="2" r="1.5" fill="#42526E"/><circle cx="9.4" cy="2" r="1.5" fill="#42526E"/></svg>
<div class="a" style="left:1357px;top:9px;line-height:0"><svg width="12" height="12" viewBox="0 0 12 12"><path d="M10.9 2.6L9.2 4.3 7.9 4.1 7.7 2.8 9.4 1.1C8.3.7 7 1 6.3 1.9c-.6.7-.7 1.7-.4 2.5L1.3 9c-.5.5-.5 1.2 0 1.7s1.2.5 1.7 0l4.6-4.6c.8.3 1.8.2 2.5-.4.9-.7 1.2-2 .8-3.1z" fill="#42526E"/></svg></div>
</div>
<div class="a" style="left:11px;top:444px;width:1378px;height:1px;background:#EEF0F3"></div>
<div class="a" style="left:0;top:414.49px;width:1400px;height:30px;">
<div class="a" style="left:29.5px;top:7.8px;line-height:0"><svg width="13" height="13" viewBox="0 0 24 24"><path fill="#A5ADBA" d="M12 1.8l3.1 6.6 7.2.9-5.3 4.9 1.4 7.1L12 17.8l-6.4 3.5 1.4-7.1L1.7 9.3l7.2-.9z"/></svg></div>
<div class="a" style="left:55px;top:9px;line-height:0"><svg width="12" height="12" viewBox="0 0 12 12"><circle cx="6" cy="6" r="6" fill="#FFAB3D"/><path d="M3.3 3.6a.6.6 0 0 1 .6-.6h4.2a.6.6 0 0 1 .6.6V7.6L7.4 9H4.6L3.3 7.6z" fill="#42526E"/><rect x="4.1" y="3.9" width="3.8" height="1.9" fill="#FFAB3D"/><circle cx="6" cy="7.3" r=".45" fill="#FFAB3D"/></svg></div>
<div class="c lk" style="left:85px;width:70px;font-size:10px;letter-spacing:-0.3px">ART-1</div>
<div class="a" style="left:181.1px;top:11.5px;line-height:0"><svg width="10" height="6" viewBox="0 0 10 6"><path d="M1 1l4 4 4-4" stroke="#6B778C" stroke-width="1.3" fill="none"/></svg></div>
<div class="c lk" style="left:197.8px;width:170.2px">PI Planning (smart house project)</div>
<div class="loz" style="left:374px;background:#FFF0DB;color:#FF991F">SAFE ART</div>
<div class="c" style="left:471px;letter-spacing:0.05px">03/Aug/20</div>
<div class="c" style="left:567px;letter-spacing:0.05px">15/Dec/20</div>
<div class="a" style="left:663px;top:9px;line-height:0"><svg width="12" height="12" viewBox="0 0 12 12"><circle cx="6" cy="6" r="6" fill="#00B8D9"/><circle cx="6" cy="6.4" r="3.8" fill="#F5D9A8"/><path d="M2.3 4.2l1.6-1 .8 2.2zM9.7 4.2l-1.6-1-.8 2.2z" fill="#C0803A"/><circle cx="6" cy="7.8" r="1" fill="#8A5A2B"/></svg></div>
<div class="c" style="left:678px;letter-spacing:-0.3px">John Brown</div>
<div class="a" style="left:774px;top:9px;height:11px;line-height:0"><span class="bd" style="background:#7A869A">90%</span><span class="bd" style="background:#0052CC">0%</span><span class="bd" style="background:#00875A">10%</span></div>
<div class="a" style="left:884px;top:8px;width:68px;height:10px;background:#DFE1E6;border-radius:3px 3px 0 0"></div>
<div class="a" style="left:884px;top:18px;width:68px;height:2px;background:#5E6C84"></div>
<div class="a" style="left:967px;top:1px;line-height:29px;font-size:8.5px;font-weight:bold;color:#172B4D;letter-spacing:-0.3px">0%</div>
<div class="c" style="left:994px">173w 1d</div>
<div class="c" style="left:1091px">1454w 4d</div>
<div class="c" style="left:1187px">0m</div>
<svg class="a" style="left:1336px;top:13px" width="11" height="4" viewBox="0 0 11 4"><circle cx="1.6" cy="2" r="1.5" fill="#42526E"/><circle cx="5.5" cy="2" r="1.5" fill="#42526E"/><circle cx="9.4" cy="2" r="1.5" fill="#42526E"/></svg>
<div class="a" style="left:1357px;top:9px;line-height:0"><svg width="12" height="12" viewBox="0 0 12 12"><path d="M10.9 2.6L9.2 4.3 7.9 4.1 7.7 2.8 9.4 1.1C8.3.7 7 1 6.3 1.9c-.6.7-.7 1.7-.4 2.5L1.3 9c-.5.5-.5 1.2 0 1.7s1.2.5 1.7 0l4.6-4.6c.8.3 1.8.2 2.5-.4.9-.7 1.2-2 .8-3.1z" fill="#42526E"/></svg></div>
</div>
<div class="a" style="left:11px;top:474px;width:1378px;height:1px;background:#EEF0F3"></div>
<div class="a" style="left:0;top:444.40000000000003px;width:1400px;height:30px;">
<div class="a" style="left:29.5px;top:7.8px;line-height:0"><svg width="13" height="13" viewBox="0 0 24 24"><path fill="#A5ADBA" d="M12 1.8l3.1 6.6 7.2.9-5.3 4.9 1.4 7.1L12 17.8l-6.4 3.5 1.4-7.1L1.7 9.3l7.2-.9z"/></svg></div>
<div class="a" style="left:55px;top:9px;line-height:0"><svg width="12" height="12" viewBox="0 0 12 12"><circle cx="6" cy="6" r="6" fill="#52C7C7"/><rect x="3.9" y="3.7" width="4.2" height="5.3" rx=".4" fill="#4A5578"/><rect x="5.3" y="3.1" width="1.4" height=".9" fill="#4A5578"/></svg></div>
<div class="c lk" style="left:85px;width:70px;font-size:10px;letter-spacing:-0.3px">PI-271</div>
<div class="a" style="left:196.8px;top:10.5px;line-height:0"><svg width="6" height="9" viewBox="0 0 6 9"><path d="M1 1l3.5 3.5L1 8" stroke="#6B778C" stroke-width="1.3" fill="none"/></svg></div>
<div class="c lk" style="left:211.2px;width:156.8px">Program Increment 1</div>
<div class="loz" style="left:374px;background:#E0F6F6;color:#2BB8B8">PROGRAM INCREMENT</div>
<div class="c" style="left:471px;letter-spacing:0.05px">03/Aug/20</div>
<div class="c" style="left:567px;letter-spacing:0.05px">14/Sep/20</div>
<svg class="a" style="left:1336px;top:13px" width="11" height="4" viewBox="0 0 11 4"><circle cx="1.6" cy="2" r="1.5" fill="#42526E"/><circle cx="5.5" cy="2" r="1.5" fill="#42526E"/><circle cx="9.4" cy="2" r="1.5" fill="#42526E"/></svg>
<div class="a" style="left:1357px;top:9px;line-height:0"><svg width="12" height="12" viewBox="0 0 12 12"><path d="M10.9 2.6L9.2 4.3 7.9 4.1 7.7 2.8 9.4 1.1C8.3.7 7 1 6.3 1.9c-.6.7-.7 1.7-.4 2.5L1.3 9c-.5.5-.5 1.2 0 1.7s1.2.5 1.7 0l4.6-4.6c.8.3 1.8.2 2.5-.4.9-.7 1.2-2 .8-3.1z" fill="#42526E"/></svg></div>
</div>
<div class="a" style="left:11px;top:503px;width:1378px;height:1px;background:#EEF0F3"></div>
<div class="a" style="left:0;top:474.31px;width:1400px;height:30px;">
<div class="a" style="left:29.5px;top:7.8px;line-height:0"><svg width="13" height="13" viewBox="0 0 24 24"><path fill="#A5ADBA" d="M12 1.8l3.1 6.6 7.2.9-5.3 4.9 1.4 7.1L12 17.8l-6.4 3.5 1.4-7.1L1.7 9.3l7.2-.9z"/></svg></div>
<div class="a" style="left:55px;top:9px;line-height:0"><svg width="12" height="12" viewBox="0 0 12 12"><circle cx="6" cy="6" r="6" fill="#52C7C7"/><rect x="3.9" y="3.7" width="4.2" height="5.3" rx=".4" fill="#4A5578"/><rect x="5.3" y="3.1" width="1.4" height=".9" fill="#4A5578"/></svg></div>
<div class="c lk" style="left:85px;width:70px;font-size:10px;letter-spacing:-0.3px">PI-272</div>
<div class="a" style="left:196.8px;top:10.5px;line-height:0"><svg width="6" height="9" viewBox="0 0 6 9"><path d="M1 1l3.5 3.5L1 8" stroke="#6B778C" stroke-width="1.3" fill="none"/></svg></div>
<div class="c lk" style="left:211.2px;width:156.8px">Program Increment 2</div>
<div class="loz" style="left:374px;background:#E0F6F6;color:#2BB8B8">PROGRAM INCREMENT</div>
<div class="c" style="left:471px;letter-spacing:0.05px">15/Sep/20</div>
<div class="c" style="left:567px;letter-spacing:0.05px">27/Oct/20</div>
<svg class="a" style="left:1336px;top:13px" width="11" height="4" viewBox="0 0 11 4"><circle cx="1.6" cy="2" r="1.5" fill="#42526E"/><circle cx="5.5" cy="2" r="1.5" fill="#42526E"/><circle cx="9.4" cy="2" r="1.5" fill="#42526E"/></svg>
<div class="a" style="left:1357px;top:9px;line-height:0"><svg width="12" height="12" viewBox="0 0 12 12"><path d="M10.9 2.6L9.2 4.3 7.9 4.1 7.7 2.8 9.4 1.1C8.3.7 7 1 6.3 1.9c-.6.7-.7 1.7-.4 2.5L1.3 9c-.5.5-.5 1.2 0 1.7s1.2.5 1.7 0l4.6-4.6c.8.3 1.8.2 2.5-.4.9-.7 1.2-2 .8-3.1z" fill="#42526E"/></svg></div>
</div>
<div class="a" style="left:11px;top:533px;width:1378px;height:1px;background:#EEF0F3"></div>
<div class="a" style="left:0;top:504.22px;width:1400px;height:30px;">
<div class="a" style="left:29.5px;top:7.8px;line-height:0"><svg width="13" height="13" viewBox="0 0 24 24"><path fill="#A5ADBA" d="M12 1.8l3.1 6.6 7.2.9-5.3 4.9 1.4 7.1L12 17.8l-6.4 3.5 1.4-7.1L1.7 9.3l7.2-.9z"/></svg></div>
<div class="a" style="left:55px;top:9px;line-height:0"><svg width="12" height="12" viewBox="0 0 12 12"><circle cx="6" cy="6" r="6" fill="#52C7C7"/><rect x="3.9" y="3.7" width="4.2" height="5.3" rx=".4" fill="#4A5578"/><rect x="5.3" y="3.1" width="1.4" height=".9" fill="#4A5578"/></svg></div>
<div class="c lk" style="left:85px;width:70px;font-size:10px;letter-spacing:-0.3px">PI-274</div>
<div class="a" style="left:196.8px;top:10.5px;line-height:0"><svg width="6" height="9" viewBox="0 0 6 9"><path d="M1 1l3.5 3.5L1 8" stroke="#6B778C" stroke-width="1.3" fill="none"/></svg></div>
<div class="c lk" style="left:211.2px;width:156.8px">Program Increment 3</div>
<div class="loz" style="left:374px;background:#E0F6F6;color:#2BB8B8">PROGRAM INCREMENT</div>
<div class="c" style="left:471px;letter-spacing:0.05px">28/Oct/20</div>
<div class="c" style="left:567px;letter-spacing:0.05px">15/Dec/20</div>
<svg class="a" style="left:1336px;top:13px" width="11" height="4" viewBox="0 0 11 4"><circle cx="1.6" cy="2" r="1.5" fill="#42526E"/><circle cx="5.5" cy="2" r="1.5" fill="#42526E"/><circle cx="9.4" cy="2" r="1.5" fill="#42526E"/></svg>
<div class="a" style="left:1357px;top:9px;line-height:0"><svg width="12" height="12" viewBox="0 0 12 12"><path d="M10.9 2.6L9.2 4.3 7.9 4.1 7.7 2.8 9.4 1.1C8.3.7 7 1 6.3 1.9c-.6.7-.7 1.7-.4 2.5L1.3 9c-.5.5-.5 1.2 0 1.7s1.2.5 1.7 0l4.6-4.6c.8.3 1.8.2 2.5-.4.9-.7 1.2-2 .8-3.1z" fill="#42526E"/></svg></div>
</div>
<div class="a" style="left:11px;top:563px;width:1378px;height:1px;background:#EEF0F3"></div>
<div class="a" style="left:0;top:534.13px;width:1400px;height:30px;">
<div class="a" style="left:29.5px;top:7.8px;line-height:0"><svg width="13" height="13" viewBox="0 0 24 24"><path fill="#A5ADBA" d="M12 1.8l3.1 6.6 7.2.9-5.3 4.9 1.4 7.1L12 17.8l-6.4 3.5 1.4-7.1L1.7 9.3l7.2-.9z"/></svg></div>
<div class="a" style="left:55px;top:9px;line-height:0"><svg width="12" height="12" viewBox="0 0 12 12"><circle cx="6" cy="6" r="6" fill="#FFAB3D"/><circle cx="6" cy="6.1" r="2.9" fill="#9E9A7A"/><path d="M6 3.2a2.9 2.9 0 0 0 0 5.8z" fill="#2B4A8A"/><rect x="6.3" y="4.3" width="1" height="3.6" rx=".5" fill="#FFAB3D"/></svg></div>
<div class="c lk" style="left:85px;width:70px;font-size:10px;letter-spacing:-0.3px">HYBR-4</div>
<div class="a" style="left:181.1px;top:11.5px;line-height:0"><svg width="10" height="6" viewBox="0 0 10 6"><path d="M1 1l4 4 4-4" stroke="#6B778C" stroke-width="1.3" fill="none"/></svg></div>
<div class="c lk" style="left:197.8px;width:170.2px">Hybrid Project</div>
<div class="loz" style="left:374px;background:#FFF0DB;color:#FF991F">HYBRID PROJECT</div>
<div class="c" style="left:471px;letter-spacing:0.05px">09/Sep/20</div>
<div class="c" style="left:567px;letter-spacing:0.05px">08/Nov/20</div>
<div class="a" style="left:774px;top:9px;height:11px;line-height:0"><span class="bd" style="background:#7A869A">92%</span><span class="bd" style="background:#0052CC">8%</span><span class="bd" style="background:#00875A">0%</span></div>
<div class="a" style="left:884px;top:8px;width:68px;height:10px;background:#DFE1E6;border-radius:3px 3px 0 0"></div>
<div class="a" style="left:884px;top:18px;width:68px;height:2px;background:#5E6C84"></div>
<div class="a" style="left:884px;top:8px;width:2px;height:10px;background:#0052CC"></div>
<div class="a" style="left:967px;top:1px;line-height:29px;font-size:8.5px;font-weight:bold;color:#172B4D;letter-spacing:-0.3px">2%</div>
<div class="c" style="left:994px">214w 4d</div>
<div class="c" style="left:1091px">538w 4d 6h 56m</div>
<div class="c" style="left:1187px">13w 2d 2h</div>
<svg class="a" style="left:1336px;top:13px" width="11" height="4" viewBox="0 0 11 4"><circle cx="1.6" cy="2" r="1.5" fill="#42526E"/><circle cx="5.5" cy="2" r="1.5" fill="#42526E"/><circle cx="9.4" cy="2" r="1.5" fill="#42526E"/></svg>
<div class="a" style="left:1357px;top:9px;line-height:0"><svg width="12" height="12" viewBox="0 0 12 12"><path d="M10.9 2.6L9.2 4.3 7.9 4.1 7.7 2.8 9.4 1.1C8.3.7 7 1 6.3 1.9c-.6.7-.7 1.7-.4 2.5L1.3 9c-.5.5-.5 1.2 0 1.7s1.2.5 1.7 0l4.6-4.6c.8.3 1.8.2 2.5-.4.9-.7 1.2-2 .8-3.1z" fill="#42526E"/></svg></div>
</div>
<div class="a" style="left:11px;top:593px;width:1378px;height:1px;background:#EEF0F3"></div>
<div class="a" style="left:0;top:564.04px;width:1400px;height:30px;">
<div class="a" style="left:29.5px;top:7.8px;line-height:0"><svg width="13" height="13" viewBox="0 0 24 24"><path fill="#A5ADBA" d="M12 1.8l3.1 6.6 7.2.9-5.3 4.9 1.4 7.1L12 17.8l-6.4 3.5 1.4-7.1L1.7 9.3l7.2-.9z"/></svg></div>
<div class="a" style="left:55px;top:9px;line-height:0"><svg width="12" height="12" viewBox="0 0 12 12"><circle cx="6" cy="6" r="6" fill="#FFC94D"/><path d="M3.6 4.3l4.8 3.4M3.6 7.7l4.8-3.4" stroke="#4E5A6E" stroke-width="1.3" stroke-linecap="round" fill="none"/></svg></div>
<div class="c lk" style="left:85px;width:70px;font-size:10px;letter-spacing:-0.3px">HSTAG-4</div>
<div class="a" style="left:196.8px;top:12.5px;width:5px;height:5px;border-radius:50%;background:#B3BAC5"></div>
<div class="c lk" style="left:211.2px;width:156.8px">Deployment</div>
<div class="loz" style="left:374px;background:#FFF4D6;color:#E6A800">HYBRID STAGE</div>
<div class="c" style="left:471px;letter-spacing:0.05px">03/Nov/20</div>
<div class="c" style="left:567px;letter-spacing:0.05px">08/Nov/20</div>
<svg class="a" style="left:1336px;top:13px" width="11" height="4" viewBox="0 0 11 4"><circle cx="1.6" cy="2" r="1.5" fill="#42526E"/><circle cx="5.5" cy="2" r="1.5" fill="#42526E"/><circle cx="9.4" cy="2" r="1.5" fill="#42526E"/></svg>
<div class="a" style="left:1357px;top:9px;line-height:0"><svg width="12" height="12" viewBox="0 0 12 12"><path d="M10.9 2.6L9.2 4.3 7.9 4.1 7.7 2.8 9.4 1.1C8.3.7 7 1 6.3 1.9c-.6.7-.7 1.7-.4 2.5L1.3 9c-.5.5-.5 1.2 0 1.7s1.2.5 1.7 0l4.6-4.6c.8.3 1.8.2 2.5-.4.9-.7 1.2-2 .8-3.1z" fill="#42526E"/></svg></div>
</div>
<div class="a" style="left:11px;top:623px;width:1378px;height:1px;background:#EEF0F3"></div>
<div class="a" style="left:0;top:593.95px;width:1400px;height:30px;">
<div class="a" style="left:29.5px;top:7.8px;line-height:0"><svg width="13" height="13" viewBox="0 0 24 24"><path fill="#A5ADBA" d="M12 1.8l3.1 6.6 7.2.9-5.3 4.9 1.4 7.1L12 17.8l-6.4 3.5 1.4-7.1L1.7 9.3l7.2-.9z"/></svg></div>
<div class="a" style="left:55px;top:9px;line-height:0"><svg width="12" height="12" viewBox="0 0 12 12"><circle cx="6" cy="6" r="6" fill="#FFC94D"/><path d="M3.6 4.3l4.8 3.4M3.6 7.7l4.8-3.4" stroke="#4E5A6E" stroke-width="1.3" stroke-linecap="round" fill="none"/></svg></div>
<div class="c lk" style="left:85px;width:70px;font-size:10px;letter-spacing:-0.3px">HSTAG-1</div>
<div class="a" style="left:196.8px;top:12.5px;width:5px;height:5px;border-radius:50%;background:#B3BAC5"></div>
<div class="c lk" style="left:211.2px;width:156.8px">Initiation of the project</div>
<div class="loz" style="left:374px;background:#FFF4D6;color:#E6A800">HYBRID STAGE</div>
<div class="c" style="left:471px;letter-spacing:0.05px">09/Sep/20</div>
<div class="c" style="left:567px;letter-spacing:0.05px">24/Sep/20</div>
<svg class="a" style="left:1336px;top:13px" width="11" height="4" viewBox="0 0 11 4"><circle cx="1.6" cy="2" r="1.5" fill="#42526E"/><circle cx="5.5" cy="2" r="1.5" fill="#42526E"/><circle cx="9.4" cy="2" r="1.5" fill="#42526E"/></svg>
<div class="a" style="left:1357px;top:9px;line-height:0"><svg width="12" height="12" viewBox="0 0 12 12"><path d="M10.9 2.6L9.2 4.3 7.9 4.1 7.7 2.8 9.4 1.1C8.3.7 7 1 6.3 1.9c-.6.7-.7 1.7-.4 2.5L1.3 9c-.5.5-.5 1.2 0 1.7s1.2.5 1.7 0l4.6-4.6c.8.3 1.8.2 2.5-.4.9-.7 1.2-2 .8-3.1z" fill="#42526E"/></svg></div>
</div>
<div class="a" style="left:11px;top:653px;width:1378px;height:1px;background:#EEF0F3"></div>
<div class="a" style="left:0;top:623.86px;width:1400px;height:30px;">
<div class="a" style="left:29.5px;top:7.8px;line-height:0"><svg width="13" height="13" viewBox="0 0 24 24"><path fill="#A5ADBA" d="M12 1.8l3.1 6.6 7.2.9-5.3 4.9 1.4 7.1L12 17.8l-6.4 3.5 1.4-7.1L1.7 9.3l7.2-.9z"/></svg></div>
<div class="a" style="left:55px;top:9px;line-height:0"><svg width="12" height="12" viewBox="0 0 12 12"><circle cx="6" cy="6" r="6" fill="#FFC94D"/><path d="M3.6 4.3l4.8 3.4M3.6 7.7l4.8-3.4" stroke="#4E5A6E" stroke-width="1.3" stroke-linecap="round" fill="none"/></svg></div>
<div class="c lk" style="left:85px;width:70px;font-size:10px;letter-spacing:-0.3px">HSTAG-2</div>
<div class="a" style="left:196.8px;top:12.5px;width:5px;height:5px;border-radius:50%;background:#B3BAC5"></div>
<div class="c lk" style="left:211.2px;width:156.8px">Operationalization</div>
<div class="loz" style="left:374px;background:#FFF4D6;color:#E6A800">HYBRID STAGE</div>
<div class="c" style="left:471px;letter-spacing:0.05px">25/Sep/20</div>
<div class="c" style="left:567px;letter-spacing:0.05px">09/Oct/20</div>
<svg class="a" style="left:1336px;top:13px" width="11" height="4" viewBox="0 0 11 4"><circle cx="1.6" cy="2" r="1.5" fill="#42526E"/><circle cx="5.5" cy="2" r="1.5" fill="#42526E"/><circle cx="9.4" cy="2" r="1.5" fill="#42526E"/></svg>
<div class="a" style="left:1357px;top:9px;line-height:0"><svg width="12" height="12" viewBox="0 0 12 12"><path d="M10.9 2.6L9.2 4.3 7.9 4.1 7.7 2.8 9.4 1.1C8.3.7 7 1 6.3 1.9c-.6.7-.7 1.7-.4 2.5L1.3 9c-.5.5-.5 1.2 0 1.7s1.2.5 1.7 0l4.6-4.6c.8.3 1.8.2 2.5-.4.9-.7 1.2-2 .8-3.1z" fill="#42526E"/></svg></div>
</div>
<div class="a" style="left:11px;top:683px;width:1378px;height:1px;background:#EEF0F3"></div>
<div class="a" style="left:0;top:653.77px;width:1400px;height:30px;">
<div class="a" style="left:29.5px;top:7.8px;line-height:0"><svg width="13" height="13" viewBox="0 0 24 24"><path fill="#A5ADBA" d="M12 1.8l3.1 6.6 7.2.9-5.3 4.9 1.4 7.1L12 17.8l-6.4 3.5 1.4-7.1L1.7 9.3l7.2-.9z"/></svg></div>
<div class="a" style="left:55px;top:9px;line-height:0"><svg width="12" height="12" viewBox="0 0 12 12"><circle cx="6" cy="6" r="6" fill="#FFC94D"/><path d="M3.6 4.3l4.8 3.4M3.6 7.7l4.8-3.4" stroke="#4E5A6E" stroke-width="1.3" stroke-linecap="round" fill="none"/></svg></div>
<div class="c lk" style="left:85px;width:70px;font-size:10px;letter-spacing:-0.3px">HSTAG-3</div>
<div class="a" style="left:194.3px;top:11.5px;line-height:0"><svg width="10" height="6" viewBox="0 0 10 6"><path d="M1 1l4 4 4-4" stroke="#6B778C" stroke-width="1.3" fill="none"/></svg></div>
<div class="c lk" style="left:211.2px;width:156.8px">Software development</div>
<div class="loz" style="left:374px;background:#FFF4D6;color:#E6A800">HYBRID STAGE</div>
<div class="c" style="left:471px;letter-spacing:0.05px">10/Oct/20</div>
<div class="c" style="left:567px;letter-spacing:0.05px">02/Nov/20</div>
<svg class="a" style="left:1336px;top:13px" width="11" height="4" viewBox="0 0 11 4"><circle cx="1.6" cy="2" r="1.5" fill="#42526E"/><circle cx="5.5" cy="2" r="1.5" fill="#42526E"/><circle cx="9.4" cy="2" r="1.5" fill="#42526E"/></svg>
<div class="a" style="left:1357px;top:9px;line-height:0"><svg width="12" height="12" viewBox="0 0 12 12"><path d="M10.9 2.6L9.2 4.3 7.9 4.1 7.7 2.8 9.4 1.1C8.3.7 7 1 6.3 1.9c-.6.7-.7 1.7-.4 2.5L1.3 9c-.5.5-.5 1.2 0 1.7s1.2.5 1.7 0l4.6-4.6c.8.3 1.8.2 2.5-.4.9-.7 1.2-2 .8-3.1z" fill="#42526E"/></svg></div>
</div>
<div class="a" style="left:11px;top:713px;width:1378px;height:1px;background:#EEF0F3"></div>
<div class="a" style="left:0;top:683.6800000000001px;width:1400px;height:30px;">
<div class="a" style="left:29.5px;top:7.8px;line-height:0"><svg width="13" height="13" viewBox="0 0 24 24"><path fill="#A5ADBA" d="M12 1.8l3.1 6.6 7.2.9-5.3 4.9 1.4 7.1L12 17.8l-6.4 3.5 1.4-7.1L1.7 9.3l7.2-.9z"/></svg></div>
<div class="a" style="left:55px;top:9px;line-height:0"><svg width="12" height="12" viewBox="0 0 12 12"><circle cx="6" cy="6" r="6" fill="#92C84A"/><path d="M5.2 3.7A2.5 2.5 0 1 1 4.6 8.6" stroke="#4E6A52" stroke-width="1.1" fill="none"/><path d="M3.2 3.4l2 .1-.6 1.9z" fill="#4A4A7A"/></svg></div>
<div class="c lk" style="left:85px;width:70px;font-size:10px;letter-spacing:-0.3px">ITER-1076</div>
<div class="a" style="left:210.0px;top:12.5px;width:5px;height:5px;border-radius:50%;background:#B3BAC5"></div>
<div class="c lk" style="left:225px;width:143px">Iteration 1</div>
<div class="loz" style="left:374px;background:#EEF7E3;color:#7CBF3A">ITERATION</div>
<div class="c" style="left:471px;letter-spacing:0.05px">10/Oct/20</div>
<div class="c" style="left:567px;letter-spacing:0.05px">17/Oct/20</div>
<svg class="a" style="left:1336px;top:13px" width="11" height="4" viewBox="0 0 11 4"><circle cx="1.6" cy="2" r="1.5" fill="#42526E"/><circle cx="5.5" cy="2" r="1.5" fill="#42526E"/><circle cx="9.4" cy="2" r="1.5" fill="#42526E"/></svg>
<div class="a" style="left:1357px;top:9px;line-height:0"><svg width="12" height="12" viewBox="0 0 12 12"><path d="M10.9 2.6L9.2 4.3 7.9 4.1 7.7 2.8 9.4 1.1C8.3.7 7 1 6.3 1.9c-.6.7-.7 1.7-.4 2.5L1.3 9c-.5.5-.5 1.2 0 1.7s1.2.5 1.7 0l4.6-4.6c.8.3 1.8.2 2.5-.4.9-.7 1.2-2 .8-3.1z" fill="#42526E"/></svg></div>
</div>
<div class="a" style="left:11px;top:743px;width:1378px;height:1px;background:#EEF0F3"></div>
<div class="a" style="left:0;top:713.5899999999999px;width:1400px;height:30px;">
<div class="a" style="left:29.5px;top:7.8px;line-height:0"><svg width="13" height="13" viewBox="0 0 24 24"><path fill="#A5ADBA" d="M12 1.8l3.1 6.6 7.2.9-5.3 4.9 1.4 7.1L12 17.8l-6.4 3.5 1.4-7.1L1.7 9.3l7.2-.9z"/></svg></div>
<div class="a" style="left:55px;top:9px;line-height:0"><svg width="12" height="12" viewBox="0 0 12 12"><circle cx="6" cy="6" r="6" fill="#92C84A"/><path d="M5.2 3.7A2.5 2.5 0 1 1 4.6 8.6" stroke="#4E6A52" stroke-width="1.1" fill="none"/><path d="M3.2 3.4l2 .1-.6 1.9z" fill="#4A4A7A"/></svg></div>
<div class="c lk" style="left:85px;width:70px;font-size:10px;letter-spacing:-0.3px">ITER-1077</div>
<div class="a" style="left:210.0px;top:12.5px;width:5px;height:5px;border-radius:50%;background:#B3BAC5"></div>
<div class="c lk" style="left:225px;width:143px">Iteration 2</div>
<div class="loz" style="left:374px;background:#EEF7E3;color:#7CBF3A">ITERATION</div>
<div class="c" style="left:471px;letter-spacing:0.05px">18/Oct/20</div>
<div class="c" style="left:567px;letter-spacing:0.05px">25/Oct/20</div>
<svg class="a" style="left:1336px;top:13px" width="11" height="4" viewBox="0 0 11 4"><circle cx="1.6" cy="2" r="1.5" fill="#42526E"/><circle cx="5.5" cy="2" r="1.5" fill="#42526E"/><circle cx="9.4" cy="2" r="1.5" fill="#42526E"/></svg>
<div class="a" style="left:1357px;top:9px;line-height:0"><svg width="12" height="12" viewBox="0 0 12 12"><path d="M10.9 2.6L9.2 4.3 7.9 4.1 7.7 2.8 9.4 1.1C8.3.7 7 1 6.3 1.9c-.6.7-.7 1.7-.4 2.5L1.3 9c-.5.5-.5 1.2 0 1.7s1.2.5 1.7 0l4.6-4.6c.8.3 1.8.2 2.5-.4.9-.7 1.2-2 .8-3.1z" fill="#42526E"/></svg></div>
</div>
<div class="a" style="left:11px;top:773px;width:1378px;height:1px;background:#EEF0F3"></div>
<div class="a" style="left:0;top:743.5px;width:1400px;height:30px;">
<div class="a" style="left:29.5px;top:7.8px;line-height:0"><svg width="13" height="13" viewBox="0 0 24 24"><path fill="#A5ADBA" d="M12 1.8l3.1 6.6 7.2.9-5.3 4.9 1.4 7.1L12 17.8l-6.4 3.5 1.4-7.1L1.7 9.3l7.2-.9z"/></svg></div>
<div class="a" style="left:55px;top:9px;line-height:0"><svg width="12" height="12" viewBox="0 0 12 12"><circle cx="6" cy="6" r="6" fill="#92C84A"/><path d="M5.2 3.7A2.5 2.5 0 1 1 4.6 8.6" stroke="#4E6A52" stroke-width="1.1" fill="none"/><path d="M3.2 3.4l2 .1-.6 1.9z" fill="#4A4A7A"/></svg></div>
<div class="c lk" style="left:85px;width:70px;font-size:10px;letter-spacing:-0.3px">ITER-1078</div>
<div class="a" style="left:210.0px;top:12.5px;width:5px;height:5px;border-radius:50%;background:#B3BAC5"></div>
<div class="c lk" style="left:225px;width:143px">Iteration 3</div>
<div class="loz" style="left:374px;background:#EEF7E3;color:#7CBF3A">ITERATION</div>
<div class="c" style="left:471px;letter-spacing:0.05px">26/Oct/20</div>
<div class="c" style="left:567px;letter-spacing:0.05px">02/Nov/20</div>
<svg class="a" style="left:1336px;top:13px" width="11" height="4" viewBox="0 0 11 4"><circle cx="1.6" cy="2" r="1.5" fill="#42526E"/><circle cx="5.5" cy="2" r="1.5" fill="#42526E"/><circle cx="9.4" cy="2" r="1.5" fill="#42526E"/></svg>
<div class="a" style="left:1357px;top:9px;line-height:0"><svg width="12" height="12" viewBox="0 0 12 12"><path d="M10.9 2.6L9.2 4.3 7.9 4.1 7.7 2.8 9.4 1.1C8.3.7 7 1 6.3 1.9c-.6.7-.7 1.7-.4 2.5L1.3 9c-.5.5-.5 1.2 0 1.7s1.2.5 1.7 0l4.6-4.6c.8.3 1.8.2 2.5-.4.9-.7 1.2-2 .8-3.1z" fill="#42526E"/></svg></div>
</div>
<div class="a" style="left:159px;top:165.3px;width:1px;height:24.909999999999997px;background:#C1C7D0;opacity:0.5;"></div>
<div class="a" style="left:172px;top:195.21px;width:1px;height:353.91999999999996px;background:#C1C7D0;"></div>
<div class="a" style="left:186px;top:225.12px;width:1px;height:174.46000000000004px;background:#C1C7D0;"></div>
<div class="a" style="left:186px;top:434.49px;width:1px;height:84.73000000000002px;background:#C1C7D0;"></div>
<div class="a" style="left:186px;top:554.13px;width:1px;height:114.63999999999999px;background:#C1C7D0;"></div>
<div class="a" style="left:199px;top:673.77px;width:1px;height:84.73000000000002px;background:#C1C7D0;"></div>
<div class="a" style="left:159px;top:190px;width:8.099999999999994px;height:1px;background:#C1C7D0"></div>
<div class="a" style="left:172px;top:220px;width:8.599999999999994px;height:1px;background:#C1C7D0"></div>
<div class="a" style="left:186px;top:250px;width:13.300000000000011px;height:1px;background:#C1C7D0"></div>
<div class="a" style="left:186px;top:279px;width:13.300000000000011px;height:1px;background:#C1C7D0"></div>
<div class="a" style="left:186px;top:309px;width:13.300000000000011px;height:1px;background:#C1C7D0"></div>
<div class="a" style="left:186px;top:339px;width:13.300000000000011px;height:1px;background:#C1C7D0"></div>
<div class="a" style="left:186px;top:369px;width:13.300000000000011px;height:1px;background:#C1C7D0"></div>
<div class="a" style="left:186px;top:399px;width:13.300000000000011px;height:1px;background:#C1C7D0"></div>
<div class="a" style="left:172px;top:429px;width:8.599999999999994px;height:1px;background:#C1C7D0"></div>
<div class="a" style="left:186px;top:459px;width:7.800000000000011px;height:1px;background:#C1C7D0"></div>
<div class="a" style="left:186px;top:489px;width:7.800000000000011px;height:1px;background:#C1C7D0"></div>
<div class="a" style="left:186px;top:519px;width:7.800000000000011px;height:1px;background:#C1C7D0"></div>
<div class="a" style="left:172px;top:549px;width:8.599999999999994px;height:1px;background:#C1C7D0"></div>
<div class="a" style="left:186px;top:579px;width:13.300000000000011px;height:1px;background:#C1C7D0"></div>
<div class="a" style="left:186px;top:608px;width:13.300000000000011px;height:1px;background:#C1C7D0"></div>
<div class="a" style="left:186px;top:638px;width:13.300000000000011px;height:1px;background:#C1C7D0"></div>
<div class="a" style="left:186px;top:668px;width:7.800000000000011px;height:1px;background:#C1C7D0"></div>
<div class="a" style="left:199px;top:698px;width:13.5px;height:1px;background:#C1C7D0"></div>
<div class="a" style="left:199px;top:728px;width:13.5px;height:1px;background:#C1C7D0"></div>
<div class="a" style="left:199px;top:758px;width:13.5px;height:1px;background:#C1C7D0"></div>
</body></html>
